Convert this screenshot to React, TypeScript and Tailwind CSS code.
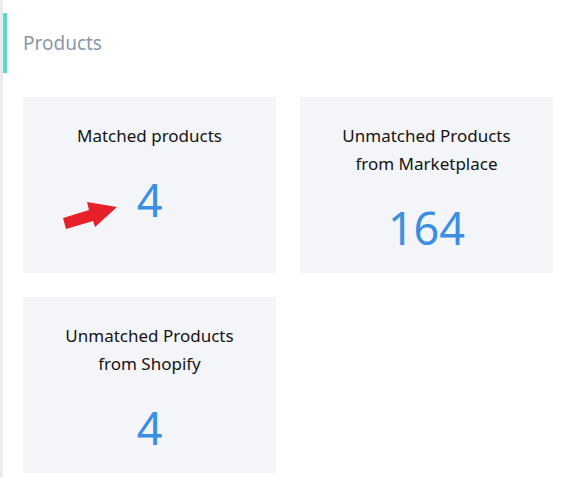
export default function App() {
  const cards = [
    { title: ['Matched products'], value: '4', arrow: true },
    { title: ['Unmatched Products', 'from Marketplace'], value: '164' },
    { title: ['Unmatched Products', 'from Shopify'], value: '4' },
  ];

  return (
    <div className="w-[581px] h-[500px] bg-white" style={{ fontFamily: '"Noto Sans", "Open Sans", sans-serif' }}>
      <div className="border-l-[3px] border-[#e9ebef] pb-1">
        {/* Section header */}
        <div className="pt-[13px]">
          <div className="h-[60px] border-l-4 border-[#5fd8c8] pl-4 flex items-center">
            <h2 className="text-[19px] text-[#8a98ab]">Products</h2>
          </div>
        </div>

        {/* Stat cards */}
        <div className="grid grid-cols-[253px_253px] gap-x-6 gap-y-6 pl-5 pt-6">
          {cards.map((card, i) => (
            <div key={i} className="relative h-[176px] bg-[#f4f5f9] flex flex-col items-center pt-[25px]">
              <div className="text-[17px] leading-7 text-[#141414] text-center">
                {card.title.map(line => (
                  <div key={line}>{line}</div>
                ))}
              </div>
              <div className="mt-[27px] text-[45px] leading-none text-[#3b8fe2]">{card.value}</div>
              {card.arrow && (
                <svg className="absolute left-[37px] top-[103px]" width="60" height="32" viewBox="0 0 60 32">
                  <polygon points="3,18 29,10 27,2 57,7 35,27 33,21 6,29" fill="#e8202a" />
                </svg>
              )}
            </div>
          ))}
        </div>
      </div>
    </div>
  );
}
